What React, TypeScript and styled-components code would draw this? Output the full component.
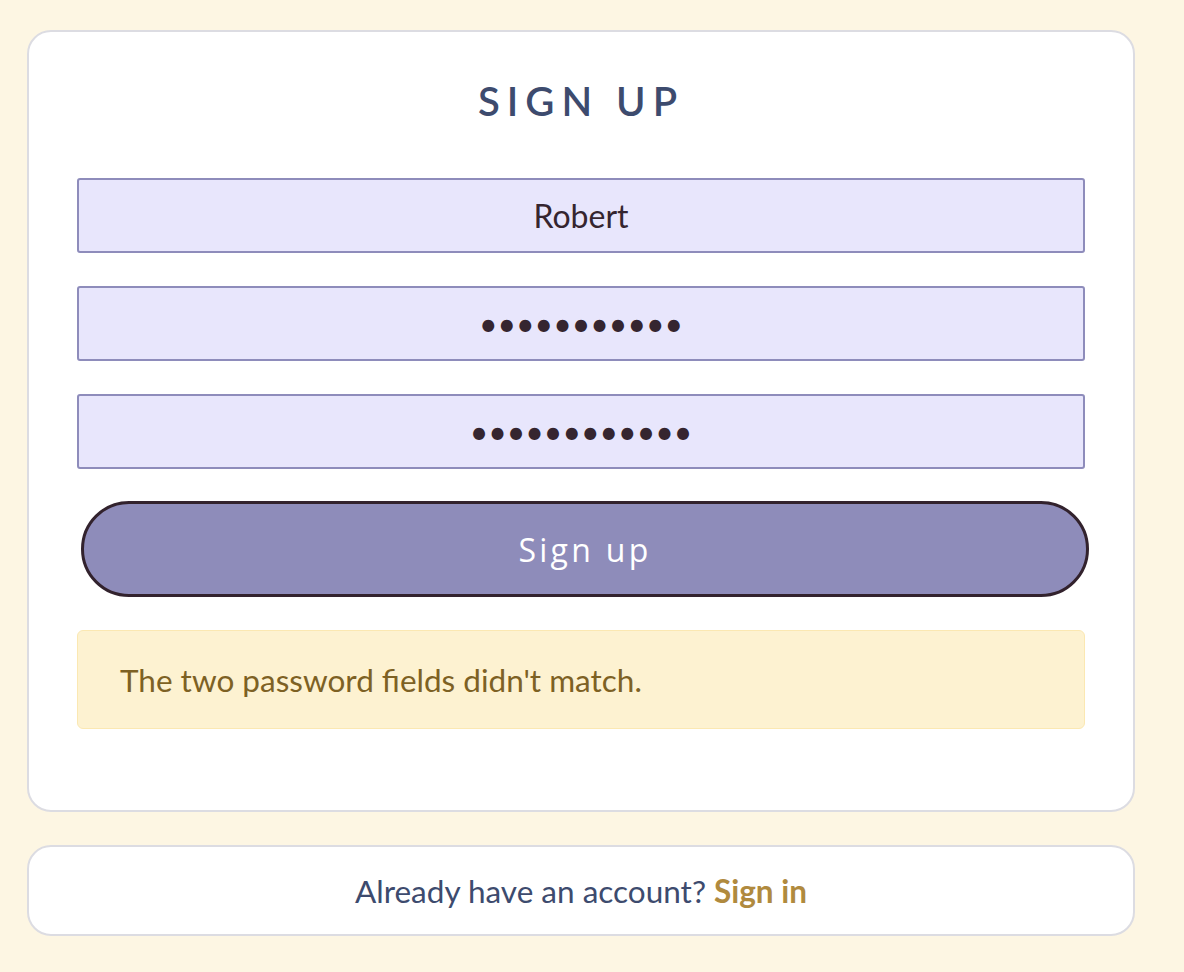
import React from "react";
import styled, { createGlobalStyle } from "styled-components";

const Global = createGlobalStyle`
  html, body { margin: 0; padding: 0; }
  body {
    background: #fdf6e3;
    font-family: Lato, "Noto Sans", sans-serif;
  }
  * { box-sizing: border-box; }
`;

const Page = styled.div`
  min-height: 972px;
  padding: 30px 49px 0 27px;
  display: flex;
  flex-direction: column;
  gap: 33px;
`;

const Card = styled.div`
  background: #ffffff;
  border: 2px solid #dcdce2;
  border-radius: 24px;
`;

const FormCard = styled(Card)`
  padding: 44px 48px 81px 48px;
  display: flex;
  flex-direction: column;
`;

const Title = styled.h1`
  margin: 0 0 52px 0;
  text-align: center;
  font-family: Lato, sans-serif;
  font-weight: 600;
  font-size: 40px;
  line-height: 50px;
  letter-spacing: 7px;
  color: #3d4b6e;
`;

const Fields = styled.div`
  display: flex;
  flex-direction: column;
  gap: 33px;
`;

const Field = styled.input`
  display: block;
  width: 100%;
  height: 75px;
  margin: 0;
  background: #e8e6fc;
  border: 2px solid #8e8cbb;
  border-radius: 3px;
  text-align: center;
  font-family: Lato, sans-serif;
  font-size: 32px;
  color: #35252f;
  outline: none;
  padding: 0 12px;
`;

const SubmitButton = styled.button`
  display: block;
  width: 100%;
  margin: 32px 0 0 4px;
  height: 96px;
  border-radius: 48px;
  border: 3px solid #32222d;
  background: #8e8cba;
  color: #ffffff;
  font-family: "Open Sans", sans-serif;
  font-size: 32px;
  letter-spacing: 3.3px;
  cursor: pointer;
`;

const Alert = styled.div`
  margin-top: 33px;
  height: 99px;
  display: flex;
  align-items: center;
  padding: 0 42px;
  background: #fdf2d1;
  border: 1px solid #fbe8b2;
  border-radius: 6px;
  color: #7d6124;
  font-size: 31.5px;
  font-family: Lato, sans-serif;
`;

const FooterCard = styled(Card)`
  height: 91px;
  display: flex;
  align-items: center;
  justify-content: center;
  font-family: Lato, sans-serif;
  font-size: 31.5px;
  color: #3d4b6e;
`;

const SignInLink = styled.a`
  color: #b08a3e;
  font-weight: 700;
  text-decoration: none;
  margin-left: 8px;
`;

export default function App() {
  return (
    <>
      <Global />
      <Page>
        <FormCard>
          <Title>SIGN UP</Title>
          <Fields>
            <Field type="text" readOnly value="Robert" />
            <Field type="password" readOnly value="abcdefghijk" />
            <Field type="password" readOnly value="abcdefghijkl" />
          </Fields>
          <SubmitButton type="button">Sign up</SubmitButton>
          <Alert>The two password fields didn't match.</Alert>
        </FormCard>
        <FooterCard>
          Already have an account?
          <SignInLink href="#">Sign in</SignInLink>
        </FooterCard>
      </Page>
    </>
  );
}
